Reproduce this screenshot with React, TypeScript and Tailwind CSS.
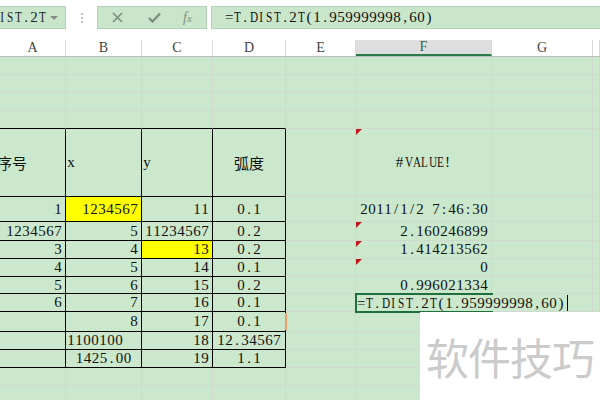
import React from "react";

type Cell = {
  t?: string;
  a?: "l" | "r" | "c";
  y?: boolean;
  tri?: boolean;
  cjk?: boolean;
  cls?: string;
};

type Row = { h: string; cells: Cell[]; top?: boolean; table?: boolean };

const W = ["w-[66px]", "w-[76px]", "w-[71px]", "w-[73px]", "w-[70px]", "w-[136px]", "w-[101px]", "flex-1"];
const LETTERS = ["A", "B", "C", "D", "E", "F", "G", ""];

const serif = "font-['Liberation_Serif','DejaVu_Serif',serif]";
const cjk = "font-['Noto_Sans_CJK_SC',sans-serif]";

// SimSun-like half-width text: every glyph sits in an 8px slot,
// wide capitals are squeezed so they stay inside it
function Half({ t, cls = "" }: { t: string; cls?: string }) {
  return (
    <span className={`${serif} text-[15px] leading-none whitespace-nowrap ${cls}`}>
      {[...t].map((ch, i) => (
        <span
          key={i}
          className={`inline-block w-[8px] text-center ${/[A-Z]/.test(ch) ? "scale-x-75" : ""}`}
        >
          {ch === " " ? "\u00a0" : ch}
        </span>
      ))}
    </span>
  );
}

const n = (t: string, extra: Partial<Cell> = {}): Cell => ({ t, a: "r", ...extra });

const ROWS: Row[] = [
  { h: "h-[18px]", cells: [] },
  { h: "h-[18px]", cells: [] },
  { h: "h-[18px]", cells: [] },
  { h: "h-[18px]", cells: [], top: true },
  {
    h: "h-[68px]",
    table: true,
    cells: [
      { t: "序号", a: "l", cjk: true, cls: "-ml-[4px]" },
      { t: "x", a: "l" },
      { t: "y", a: "l" },
      { t: "弧度", a: "c", cjk: true },
      {},
      { t: "#VALUE!", a: "c", tri: true },
    ],
  },
  {
    h: "h-[25px]",
    table: true,
    cells: [n("1"), n("1234567", { y: true }), n("11"), { t: "0.1", a: "c" }, {}, n("2011/1/2 7:46:30")],
  },
  {
    h: "h-[19px]",
    table: true,
    cells: [n("1234567"), n("5"), n("11234567"), { t: "0.2", a: "c" }, {}, n("2.160246899", { tri: true })],
  },
  {
    h: "h-[18px]",
    table: true,
    cells: [n("3"), n("4"), n("13", { y: true }), { t: "0.2", a: "c" }, {}, n("1.414213562", { tri: true })],
  },
  {
    h: "h-[18px]",
    table: true,
    cells: [n("4"), n("5"), n("14"), { t: "0.1", a: "c" }, {}, n("0", { tri: true })],
  },
  {
    h: "h-[17px]",
    table: true,
    cells: [n("5"), n("6"), n("15"), { t: "0.2", a: "c" }, {}, n("0.996021334")],
  },
  { h: "h-[18px]", table: true, cells: [n("6"), n("7"), n("16"), { t: "0.1", a: "c" }] },
  { h: "h-[20px]", table: true, cells: [{}, n("8"), n("17"), { t: "0.1", a: "c" }] },
  { h: "h-[18px]", table: true, cells: [{}, { t: "1100100", a: "l" }, n("18"), { t: "12.34567", a: "c" }] },
  { h: "h-[18px]", table: true, cells: [{}, { t: "1425.00", a: "c" }, n("19"), { t: "1.1", a: "c" }] },
  { h: "h-[18px]", cells: [] },
  { h: "h-[18px]", cells: [] },
];

function GridCell({ c, i, row }: { c: Cell; i: number; row: Row }) {
  const inTable = i < 4 && row.table;
  const border = inTable
    ? "border-r border-b border-black"
    : i < 4 && row.top
    ? "border-r border-b border-r-[#cfd9cf] border-b-black"
    : "border-r border-b border-[#cfd9cf]";
  const align = c.a === "r" ? "justify-end pr-[3px]" : c.a === "c" ? "justify-center" : "justify-start pl-[1px]";
  return (
    <div
      className={`${W[i]} shrink-0 h-full relative flex items-center overflow-visible whitespace-nowrap ${border} ${align} ${
        c.y ? "bg-[#ffff00]" : ""
      }`}
    >
      {c.tri && (
        <span className="absolute left-0 top-0 w-0 h-0 border-t-[6px] border-r-[6px] border-t-[#c0161b] border-r-transparent" />
      )}
      {c.t &&
        (c.cjk ? (
          <span className={`${cjk} text-[15px] text-[#111] leading-none ${c.cls ?? ""}`}>{c.t}</span>
        ) : (
          <Half t={c.t} cls="text-[#111]" />
        ))}
    </div>
  );
}

export default function App() {
  return (
    <div className="w-[600px] h-[400px] overflow-hidden relative bg-[#cbe8cd] select-none">
      {/* formula bar */}
      <div className="h-[40px] bg-white flex items-start pt-[6px]">
        <div className="w-[66px] h-[23px] bg-[#c9e6cb] border border-l-0 border-[#b6d0b7] flex items-center overflow-hidden relative">
          <Half t="DIST.2T" cls="text-[#222] -ml-[10px]" />
          <span className="absolute right-[7px] top-[9px] w-0 h-0 border-l-[4px] border-r-[4px] border-t-[4px] border-l-transparent border-r-transparent border-t-[#8a8a8a]" />
        </div>
        <div className="w-[31px] h-[23px] flex items-center justify-center">
          <span className="flex flex-col gap-[2px]">
            <span className="w-[2px] h-[2px] bg-[#c4c4c4]" />
            <span className="w-[2px] h-[2px] bg-[#c4c4c4]" />
            <span className="w-[2px] h-[2px] bg-[#c4c4c4]" />
          </span>
        </div>
        <div className="w-[110px] h-[23px] bg-[#c9e6cb] border border-[#b6d0b7] flex items-center">
          <svg className="ml-[14px]" width="11" height="11" viewBox="0 0 11 11">
            <path d="M1 1 L10 10 M10 1 L1 10" stroke="#7f8c80" strokeWidth="1.6" fill="none" />
          </svg>
          <svg className="ml-[25px]" width="13" height="11" viewBox="0 0 13 11">
            <path d="M1 6 L4.5 9.5 L12 1.5" stroke="#7f8c80" strokeWidth="2.4" fill="none" />
          </svg>
          <span className="ml-[22px] font-['Liberation_Serif',serif] italic text-[14px] text-[#7f8c80] leading-none">
            f<span className="text-[11px]">x</span>
          </span>
        </div>
        <div className="flex-1 ml-[4px] h-[23px] bg-[#c9e6cb] border border-r-0 border-[#b6d0b7] flex items-center pl-[13px]">
          <Half t="=T.DIST.2T(1.959999998,60)" cls="text-[#111]" />
        </div>
      </div>

      {/* column headers */}
      <div className="h-[17px] flex bg-white border-b border-[#bdbdbd]">
        {LETTERS.map((l, i) => (
          <div
            key={i}
            className={`${W[i]} shrink-0 h-full flex items-center justify-center border-r border-[#dadada] ${
              l === "F" ? "bg-[#dedede] border-b-2 border-b-[#2c7a4b]" : ""
            }`}
          >
            <span className={`${serif} text-[14px] leading-none ${l === "F" ? "text-[#2c6b45]" : "text-[#444]"}`}>{l}</span>
          </div>
        ))}
      </div>

      {/* sheet rows */}
      {ROWS.map((row, r) => (
        <div key={r} className={`${row.h} flex`}>
          {W.map((_, i) => (
            <GridCell key={i} i={i} row={row} c={row.cells[i] ?? {}} />
          ))}
        </div>
      ))}

      {/* small orange mark at table edge */}
      <span className="absolute left-[285px] top-[313px] w-[2px] h-[17px] bg-[#f0a070]" />

      {/* active cell editor */}
      <div className="absolute left-[355px] top-[293px] w-[138px] h-[20px] border-t-2 border-l-2 border-b-2 border-[#1f6e40]" />
      <div className="absolute left-[357px] top-[295px] h-[16px] flex items-center">
        <Half t="=T.DIST.2T(1.959999998,60)" cls="text-[#111]" />
        <span className="w-[1px] h-[16px] bg-black ml-[2px]" />
      </div>

      {/* watermark */}
      <div className="absolute left-[420px] top-[312px] right-0 bottom-0 bg-white flex items-center justify-center">
        <span className={`${cjk} text-[43px] text-[#cbcbcb] leading-none tracking-[-1px]`}>软件技巧</span>
      </div>
    </div>
  );
}
